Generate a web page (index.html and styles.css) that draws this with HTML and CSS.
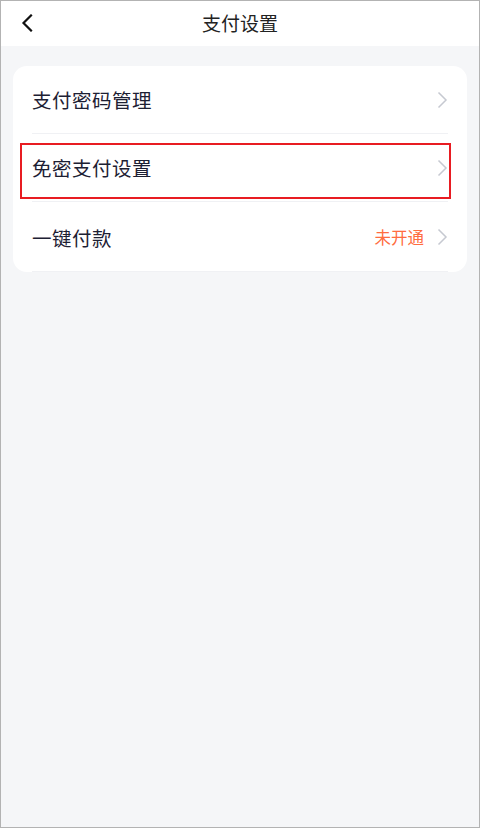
FILE: index.html
```html
<!DOCTYPE html>
<html lang="zh-CN">
<head>
<meta charset="utf-8">
<title>支付设置</title>
<link rel="stylesheet" href="styles.css">
</head>
<body>
<div class="frame">
  <header class="header">
    <span class="back">
      <svg width="12" height="18" viewBox="0 0 12 18"><path d="M10 1.5 L2.5 9 L10 16.5" fill="none" stroke="#111" stroke-width="2.2" stroke-linecap="square"/></svg>
    </span>
    <h1 class="title">支付设置</h1>
  </header>
  <main class="content">
    <section class="card">
      <div class="row">
        <span class="label">支付密码管理</span>
        <span class="right">
          <svg class="chev" width="11" height="18" viewBox="0 0 11 18"><path d="M1.5 1.5 L9 9 L1.5 16.5" fill="none" stroke="#c6c9d1" stroke-width="1.5"/></svg>
        </span>
      </div>
      <div class="row">
        <span class="label">免密支付设置</span>
        <span class="right">
          <svg class="chev" width="11" height="18" viewBox="0 0 11 18"><path d="M1.5 1.5 L9 9 L1.5 16.5" fill="none" stroke="#c6c9d1" stroke-width="1.5"/></svg>
        </span>
      </div>
      <div class="row">
        <span class="label">一键付款</span>
        <span class="right">
          <span class="status">未开通</span>
          <svg class="chev" width="11" height="18" viewBox="0 0 11 18"><path d="M1.5 1.5 L9 9 L1.5 16.5" fill="none" stroke="#c6c9d1" stroke-width="1.5"/></svg>
        </span>
      </div>
    </section>
  </main>
  <div class="highlight"></div>
</div>
</body>
</html>
```
FILE: styles.css
```css
* { box-sizing: border-box; }
html, body { margin: 0; padding: 0; }
body {
  font-family: "Noto Sans CJK SC", "Noto Sans", sans-serif;
  background: #f5f6f8;
}
.frame {
  position: relative;
  width: 480px;
  height: 828px;
  border: 1px solid #b3b3b3;
  background: #f5f6f8;
  overflow: hidden;
}
.header {
  height: 45px;
  background: #fff;
  display: flex;
  align-items: center;
  justify-content: center;
  position: relative;
}
.back {
  position: absolute;
  left: 20px;
  top: 13px;
  display: flex;
}
.title {
  margin: 0;
  font-size: 19px;
  font-weight: 400;
  color: #222;
  line-height: 1;
  margin-top: -2px;
}
.content {
  padding: 20px 12px 0;
}
.card {
  background: #fff;
  border-radius: 14px;
  padding: 0 19px;
}
.row {
  height: 68px;
  display: flex;
  align-items: center;
  justify-content: space-between;
  border-bottom: 1px solid #f0f1f4;
}
.row:last-child { height: 70px; padding-top: 1px; }
.label {
  font-size: 19.5px;
  color: #1d2033;
  letter-spacing: 0.5px;
}
.right {
  display: flex;
  align-items: center;
  gap: 13px;
}
.status {
  font-size: 16.5px;
  color: #ff6c40;
}
.chev { display: block; }
.highlight {
  position: absolute;
  left: 19px;
  top: 142px;
  width: 431px;
  height: 56px;
  border: 2px solid #e81c22;
  pointer-events: none;
}
```
